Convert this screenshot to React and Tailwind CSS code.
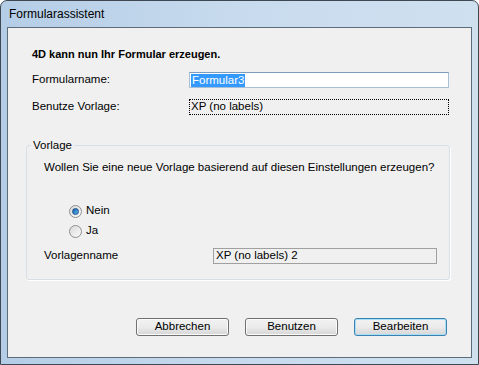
const font = { fontFamily: '"Liberation Sans", Arial, sans-serif' };

const Radio = ({ checked, label }) => (
  <div className="flex items-center h-[20px]">
    <span className="w-[13px] h-[13px] rounded-full border border-[#8e8f8f] bg-gradient-to-br from-[#d9d9d9] to-[#fbfbfb] flex items-center justify-center">
      {checked && <span className="w-[7px] h-[7px] rounded-full bg-gradient-to-br from-[#0d5ea8] to-[#5fb8ef] border border-[#1a4f86]"></span>}
    </span>
    <span className="ml-[4px] text-black">{label}</span>
  </div>
);

const Button = ({ label, focused }) => (
  <button
    className={`w-[93px] h-[18px] rounded-[3px] border bg-gradient-to-b from-[#f2f2f2] via-[#ebebeb] to-[#d6d6d6] text-[11.5px] leading-none text-black ${focused ? 'border-[#3c7fb1] shadow-[inset_0_0_0_1px_#a6e1f8]' : 'border-[#707070] shadow-[inset_0_0_0_1px_#fcfcfc]'}`}
  >
    {label}
  </button>
);

export default function App() {
  return (
    <div className="w-[479px] h-[365px] bg-white">
      <div
        className="w-[479px] h-[365px] rounded-t-[7px] border border-[#3f4852] bg-gradient-to-r from-[#b4cde6] via-[#c8dbee] to-[#cfe0ef] flex flex-col"
        style={font}
      >
        <div className="h-[26px] flex items-center pl-[8px] text-[12px] text-black">
          Formularassistent
        </div>
        <div className="flex-1 mx-[6px] mb-[6px] border border-[#5e6b78] bg-[#f0f0f0] text-[11.5px] text-black">
          <div className="pl-[24px] pt-[19px] font-bold text-[11px] leading-[14px]">4D kann nun Ihr Formular erzeugen.</div>

          <div className="flex items-center mt-[11px] pl-[24px] h-[16px]">
            <span className="w-[157px]">Formularname:</span>
            <div className="w-[260px] h-[16px] border border-[#a8bfd6] border-t-[#7d9cbd] bg-white flex items-center px-[1px]">
              <span className="bg-[#3399ff] text-white leading-[13px] px-[1px]">Formular3</span>
            </div>
          </div>

          <div className="flex items-center mt-[11px] pl-[24px] h-[16px]">
            <span className="w-[157px]">Benutze Vorlage:</span>
            <div className="w-[260px] h-[16px] border border-dotted border-black flex items-center px-[1px]">
              XP (no labels)
            </div>
          </div>

          <div className="relative ml-[18px] mt-[30px] w-[424px] h-[135px] rounded-[3px] border border-[#d5dfe5] shadow-[1px_1px_0_#ffffff]">
            <span className="absolute -top-[8px] left-[4px] px-[2px] bg-[#f0f0f0] leading-[14px]">Vorlage</span>
            <div className="pl-[17px] pt-[14px] leading-[14px] whitespace-nowrap">
              Wollen Sie eine neue Vorlage basierend auf diesen Einstellungen erzeugen?
            </div>
            <div className="pl-[42px] mt-[27px] flex flex-col">
              <Radio checked label="Nein" />
              <Radio label="Ja" />
            </div>
            <div className="flex items-center pl-[17px] mt-[7px] h-[16px]">
              <span className="w-[169px]">Vorlagenname</span>
              <div className="w-[224px] h-[16px] border border-[#a0a0a0] bg-[#f0f0f0] flex items-center px-[2px]">
                XP (no labels) 2
              </div>
            </div>
          </div>

          <div className="flex justify-end gap-[16px] pr-[24px] mt-[38px]" style={font}>
            <Button label="Abbrechen" />
            <Button label="Benutzen" />
            <Button label="Bearbeiten" focused />
          </div>
        </div>
      </div>
    </div>
  );
}
